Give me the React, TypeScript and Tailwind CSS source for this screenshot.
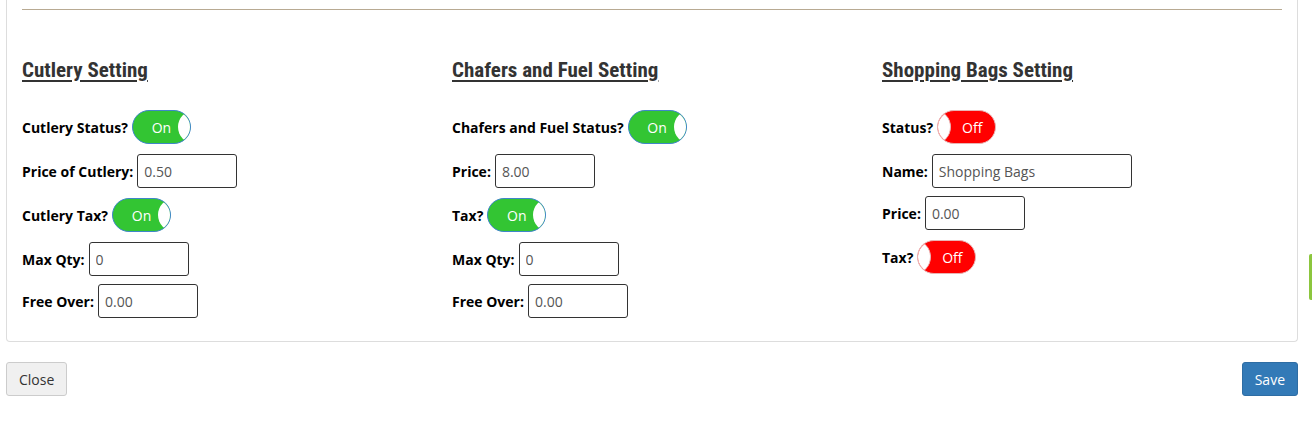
import React from "react";

const font = { fontFamily: '"Open Sans", "Liberation Sans", sans-serif' };
const headFont = {
  fontFamily: '"Roboto Condensed", "Liberation Sans Narrow", "Roboto", sans-serif',
};

function Toggle({ on }: { on: boolean }) {
  if (on) {
    return (
      <span className="relative inline-flex h-[34px] w-[59px] shrink-0 items-center overflow-hidden rounded-full border border-[#3f86c9] bg-[#33c533]">
        <span className="w-[45px] pl-[12px] text-center text-[14px] text-white">On</span>
        <span className="absolute left-[45px] top-[-1px] h-[34px] w-[34px] rounded-full bg-white" />
      </span>
    );
  }
  return (
    <span className="relative inline-flex h-[34px] w-[59px] shrink-0 items-center justify-end overflow-hidden rounded-full border border-[#e8b4b4] bg-[#ff0000]">
      <span className="absolute left-[-21px] top-[-1px] h-[34px] w-[34px] rounded-full border-r border-[#e8b4b4] bg-white" />
      <span className="w-[45px] pr-[1px] text-center text-[14px] text-white">Off</span>
    </span>
  );
}

function Input({ value, w = "w-[100px]" }: { value: string; w?: string }) {
  return (
    <input
      readOnly
      value={value}
      className={`${w} h-[34px] rounded-[3px] border border-[#333] bg-white px-[6px] text-[14px] text-[#555] outline-none`}
      style={font}
    />
  );
}

function Row({
  label,
  children,
  mb = "mb-[10px]",
}: {
  label: string;
  children: React.ReactNode;
  mb?: string;
}) {
  return (
    <div className={`flex h-[34px] items-center gap-[4px] ${mb}`}>
      <span className="text-[14px] font-bold text-black">{label}</span>
      {children}
    </div>
  );
}

function Heading({ children }: { children: React.ReactNode }) {
  return (
    <h3
      className="mb-[28px] text-[21px] font-bold leading-[24px] text-[#333] underline decoration-[2px] underline-offset-[3px]"
      style={{ ...headFont, fontStretch: "condensed" }}
    >
      {children}
    </h3>
  );
}

export default function App() {
  return (
    <div className="relative h-[437px] w-[1312px] overflow-hidden bg-white" style={font}>
      <div className="pl-[6px] pr-[14px]">
        <div className="rounded-b-[4px] border-x border-b border-[#dddddd] px-[15px] pb-[23px]">
          <div className="h-[9px]" />
          <div className="h-px bg-[#b8aa92]" />
          <div className="mx-[-15px] grid grid-cols-3 pt-[48px]">
            <div className="px-[15px]">
              <Heading>Cutlery Setting</Heading>
              <Row label="Cutlery Status?">
                <Toggle on />
              </Row>
              <Row label="Price of Cutlery:">
                <Input value="0.50" />
              </Row>
              <Row label="Cutlery Tax?">
                <Toggle on />
              </Row>
              <Row label="Max Qty:" mb="mb-[8px]">
                <Input value="0" />
              </Row>
              <Row label="Free Over:" mb="mb-0">
                <Input value="0.00" />
              </Row>
            </div>
            <div className="px-[15px]">
              <Heading>Chafers and Fuel Setting</Heading>
              <Row label="Chafers and Fuel Status?">
                <Toggle on />
              </Row>
              <Row label="Price:">
                <Input value="8.00" />
              </Row>
              <Row label="Tax?">
                <Toggle on />
              </Row>
              <Row label="Max Qty:" mb="mb-[8px]">
                <Input value="0" />
              </Row>
              <Row label="Free Over:" mb="mb-0">
                <Input value="0.00" />
              </Row>
            </div>
            <div className="px-[15px]">
              <Heading>Shopping Bags Setting</Heading>
              <Row label="Status?">
                <Toggle on={false} />
              </Row>
              <Row label="Name:" mb="mb-[8px]">
                <Input value="Shopping Bags" w="w-[200px]" />
              </Row>
              <Row label="Price:">
                <Input value="0.00" />
              </Row>
              <Row label="Tax?" mb="mb-0">
                <Toggle on={false} />
              </Row>
            </div>
          </div>
        </div>
        <div className="mt-[20px] flex items-center justify-between">
          <button className="h-[34px] rounded-[3px] border border-[#cccccc] bg-[#f0f0f0] px-[12px] text-[14px] text-[#333]">
            Close
          </button>
          <button className="h-[34px] rounded-[3px] border border-[#2e6da4] bg-[#337ab7] px-[12px] text-[14px] text-white">
            Save
          </button>
        </div>
      </div>
      <div className="absolute right-0 top-[254px] h-[46px] w-[3px] rounded-l-[2px] bg-[#8cc63e]" />
    </div>
  );
}
